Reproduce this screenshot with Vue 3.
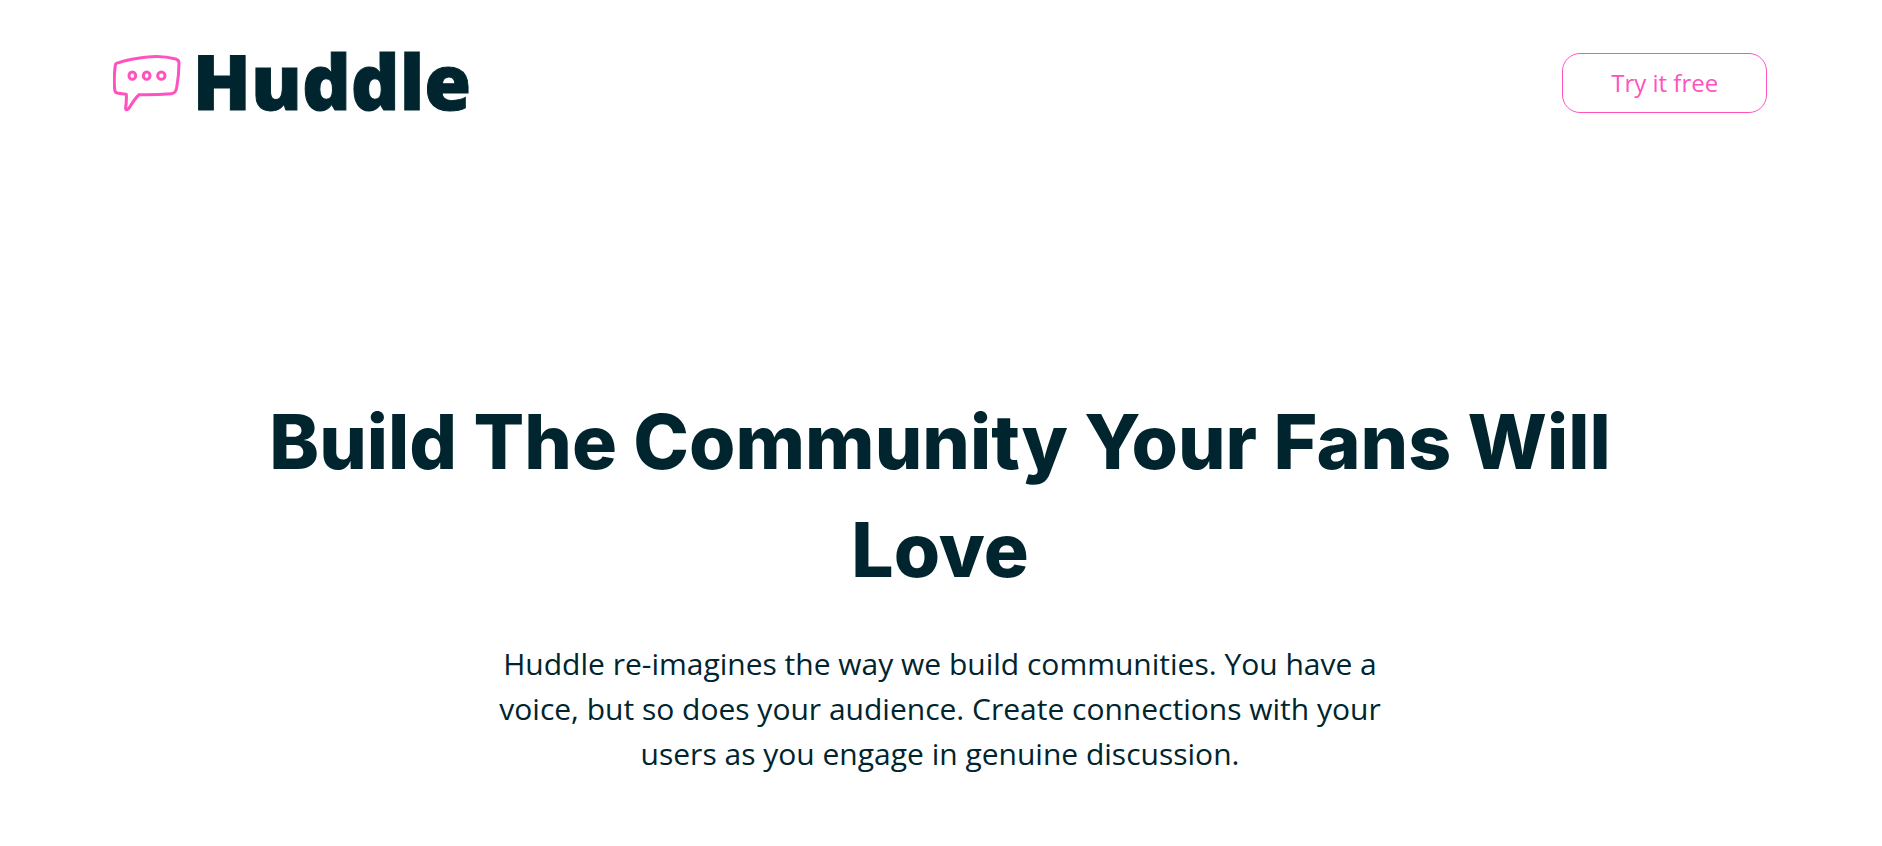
<script setup>
const heading = 'Build The Community Your Fans Will Love'
const intro =
  'Huddle re-imagines the way we build communities. You have a voice, but so does your audience. Create connections with your users as you engage in genuine discussion.'
</script>

<template>
  <div class="page">
    <header class="header">
      <div class="logo">
        <svg class="logo-icon" viewBox="36 42 204 174" fill="none" aria-hidden="true">
          <path
            d="M46 70Q93 55 139 51Q184 46 224 57C230 59 234 62 234 69Q234 104 227 143Q224 160 211 161Q164 165 114 164Q101 177 83 206C79 211 73 211 74 204Q77 182 76 163Q61 162 49 159Q42 158 41 148Q38 111 43 76C43 73 44 71 46 70Z"
          />
          <ellipse cx="94" cy="107" rx="10" ry="11" />
          <ellipse cx="137" cy="107" rx="10" ry="11" />
          <ellipse cx="181" cy="107" rx="11" ry="11" />
        </svg>
        <span class="logo-text">Huddle</span>
      </div>
      <button class="try" type="button">Try it free</button>
    </header>
    <main class="hero">
      <h1>{{ heading }}</h1>
      <p>{{ intro }}</p>
    </main>
  </div>
</template>

<style>
body {
  margin: 0;
  background: #fff;
}
</style>

<style scoped>
.page {
  padding-right: 2px;
  color: #00252e;
  font-family: "Open Sans", sans-serif;
}
.header {
  display: flex;
  align-items: center;
  justify-content: space-between;
  padding: 40px 6% 0;
}
.logo {
  display: flex;
  align-items: center;
  gap: 12px;
}
.logo-icon {
  width: 68px;
  height: 58px;
}
.logo-icon path,
.logo-icon ellipse {
  stroke: #ff52bf;
  stroke-width: 9;
  stroke-linejoin: round;
}
.logo-text {
  padding-bottom: 4px;
  font: 800 76px/82px "Open Sans", sans-serif;
  -webkit-text-stroke: 1px #00252e;
  stroke-linejoin: round;
}
.try {
  padding: 12px 48px;
  border: 1px solid #ff52bf;
  border-radius: 18px;
  background: #fff;
  color: #ff52bf;
  font: 400 24px/34px "Open Sans", sans-serif;
  cursor: pointer;
}
.hero {
  display: flex;
  flex-direction: column;
  align-items: center;
  padding: 262px 12% 60px;
  text-align: center;
}
h1 {
  max-width: 1400px;
  margin: 0;
  font: 800 75px/108px Inter, sans-serif;
}
p {
  max-width: 900px;
  margin: 37px 0 0;
  font-size: 30px;
  line-height: 45px;
}
</style>
